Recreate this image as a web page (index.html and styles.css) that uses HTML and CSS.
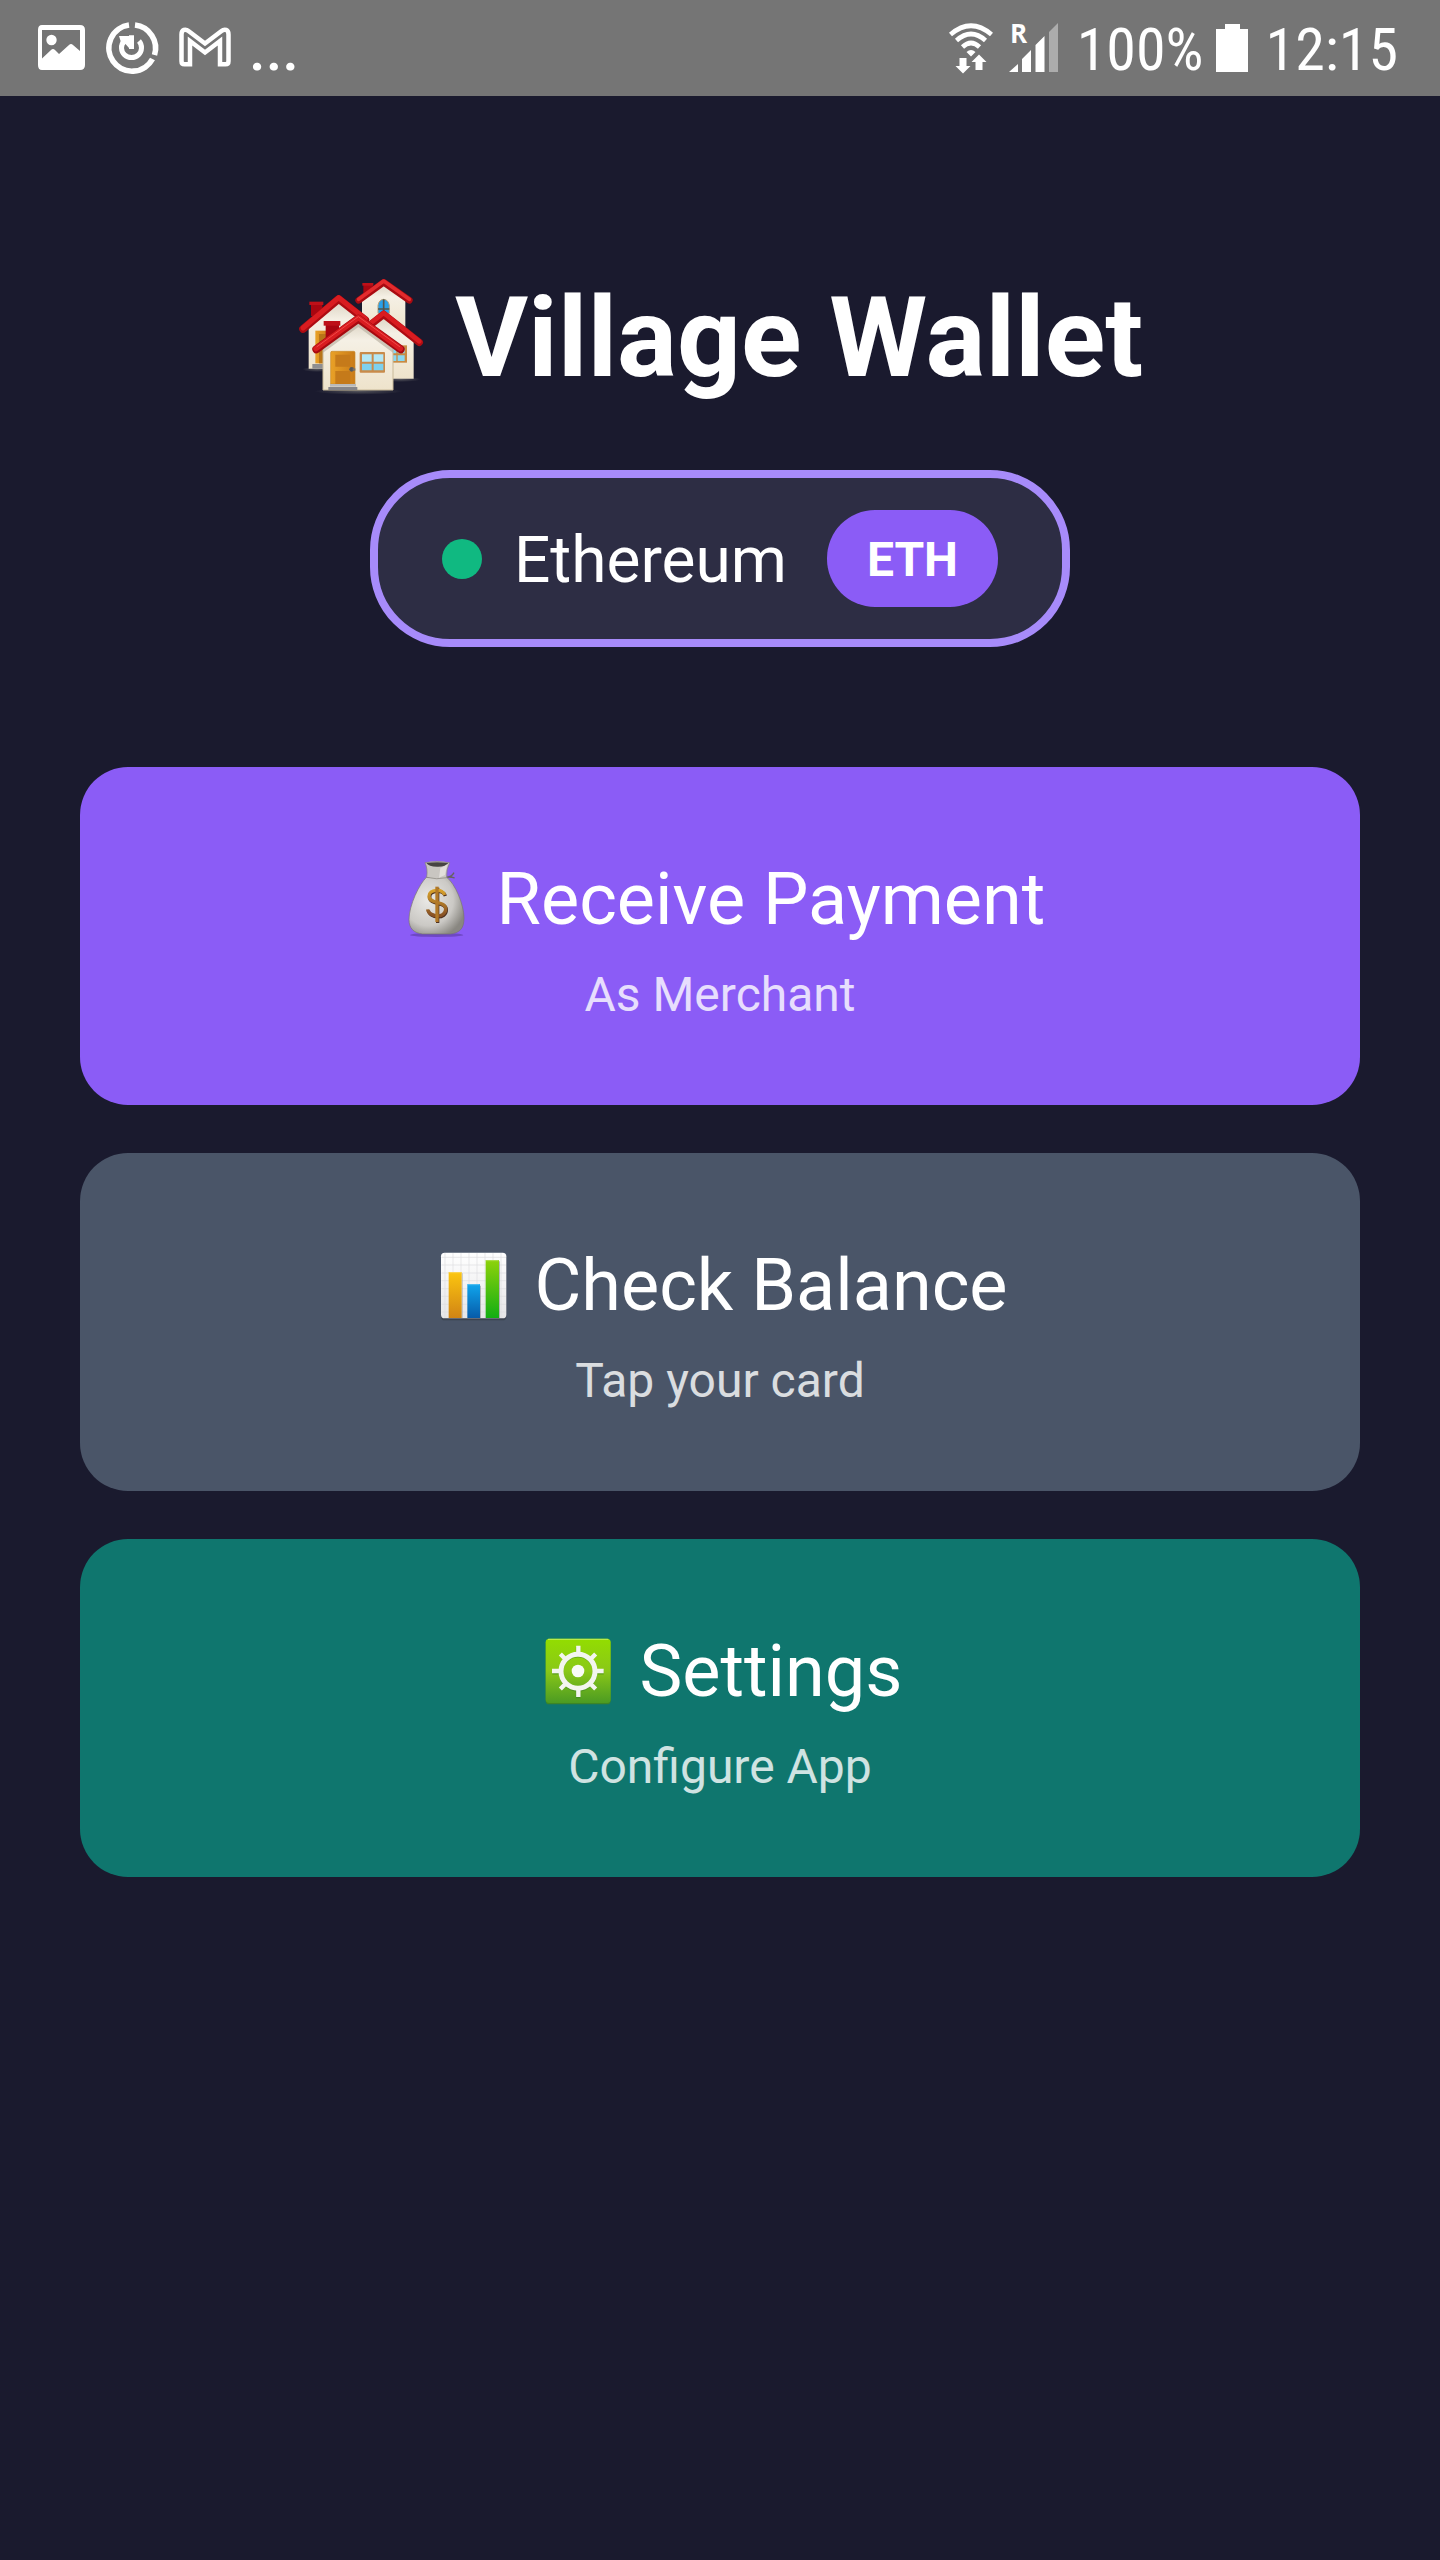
FILE: index.html
```html
<!DOCTYPE html>
<html lang="en">
<head>
<meta charset="utf-8">
<meta name="viewport" content="width=device-width, initial-scale=1">
<title>Village Wallet</title>
<link rel="stylesheet" href="styles.css">
</head>
<body>
<header class="status-bar">
  <div class="status-group notifications">
    <svg width="48" height="52" viewBox="0 0 48 52" fill="#fff" aria-hidden="true">
      <path fill-rule="evenodd" d="M4 3h38q5 0 5 5v35q0 5-5 5H4q-4 0-4-5V8q0-5 4-5zm0 5v28.500l9-8.500q2-2 4 0l4 4 10-9q2-2 4 0l7 6V8z"/>
      <circle cx="13.500" cy="18" r="5.200"/>
    </svg>
    <svg width="52" height="52" viewBox="0 0 52 52" fill="none" stroke="#fff" aria-hidden="true">
      <path stroke-width="5.600" d="M23 3A23.200 23.200 0 1 0 46.500 37M29 3A23.200 23.200 0 0 1 48.500 33"/>
      <path stroke-width="5" d="M18 19a10 10 0 1 0 15 0M25.500 14v13"/>
      <path fill="#fff" stroke="none" d="M13 14h10v12l-3.500-4-3 3z"/>
      <path stroke-width="1.500" d="M23 14h5"/>
    </svg>
    <svg width="54" height="52" viewBox="0 0 54 52" fill="none" stroke="#fff" stroke-width="4.500" stroke-linejoin="miter" aria-hidden="true">
      <path d="M12 42.300H6.500q-3 0-3-3V12.500c0-5 4-6 7-3.500L27 21.500 43.500 9c3-2.500 7-1.500 7 3.500v26.800q0 3-3 3H42V19L27 30.500 12 19z"/>
    </svg>
    <span class="more">...</span>
  </div>
  <div class="status-group system">
    <svg width="44" height="52" viewBox="0 0 44 52" fill="none" stroke="#fff" aria-hidden="true">
      <path stroke-width="4.600" d="M1.500 12.500Q22-5 42.500 12.500M7.500 18.500Q22 5.500 36.500 18.500M13.500 25Q22 17 30.500 25"/>
      <path fill="#fff" stroke="none" d="M17.500 30q4.500-4 9 0L22 34.500zM10.500 36h7v8h4L14 51.500 6.500 44h4zM26.500 48v-8h-4L30 32.500l7.500 7.500h-4v8z"/>
    </svg>
    <svg width="50" height="52" viewBox="0 0 50 52" fill="#fff" aria-hidden="true">
      <path d="M0 50l9-8v8zM13 50V37l9-9v22zM26.500 50V23l9-9v36z"/>
      <path opacity=".4" d="M40 50V10l9-9v49z"/>
      <text x="1" y="21" class="roaming">R</text>
    </svg>
    <span class="battery-level">100%</span>
    <svg width="32" height="52" viewBox="0 0 32 52" fill="#fff" aria-hidden="true"><path d="M9 2h15v5h8v43H0V7h9z"/></svg>
    <time class="clock">12:15</time>
  </div>
</header>

<main class="home">
  <h1 class="brand">
    <svg width="130" height="120" viewBox="50 54 390 360" aria-hidden="true">
      <defs>
        <linearGradient id="wall" x2="0" y2="1"><stop stop-color="#d8d0bf"/><stop offset=".3" stop-color="#f5f0e5"/><stop offset="1" stop-color="#eee3cb"/></linearGradient>
        <linearGradient id="door" x2="1"><stop stop-color="#e9a127"/><stop offset="1" stop-color="#c97b18"/></linearGradient>
        <radialGradient id="shade"><stop stop-color="#777" stop-opacity=".6"/><stop offset="1" stop-color="#777" stop-opacity="0"/></radialGradient>
      </defs>
      <ellipse cx="235" cy="394" rx="132" ry="10" fill="url(#shade)"/>
      <ellipse cx="360" cy="358" rx="62" ry="8" fill="url(#shade)"/>
      <ellipse cx="110" cy="328" rx="44" ry="8" fill="url(#shade)"/>
      <path fill="#a80610" d="M249 74h28v30h-28z"/><path fill="#be1018" d="M246 69h33v8h-33z"/>
      <path fill="url(#wall)" d="M245 115l65-49 65 49v100H245z"/>
      <path fill="#2aa0e8" stroke="#b9a37c" stroke-width="3" d="M293 160v-24q3-17 17-18 14 1 17 18v24z"/>
      <path stroke="#56554b" stroke-width="5" d="M310 118v42M293 147h34"/>
      <path fill="none" stroke="#a90b11" stroke-width="20" stroke-linecap="round" stroke-linejoin="round" d="M235 121l75-54 77 54"/>
      <path fill="none" stroke="#e32b2d" stroke-width="11" stroke-linecap="round" stroke-linejoin="round" d="M235 118l75-55 77 55"/>
      <path fill="#a80610" d="M92 133h34v35H92z"/><path fill="#be1018" d="M87 125h42v10H87z"/>
      <path fill="url(#wall)" d="M85 195l90-78 80 65v144H85z"/>
      <path fill="url(#door)" d="M105 212h44v98h-44z"/><path fill="#b87518" d="M116 222h30v88h-30z"/>
      <path fill="#8e8e91" d="M96 312h50v14H96z"/>
      <path fill="none" stroke="#ad0c12" stroke-width="23" stroke-linecap="round" stroke-linejoin="round" d="M68 207l107-90 80 63"/>
      <path fill="none" stroke="#d91c20" stroke-width="15" stroke-linecap="round" stroke-linejoin="round" d="M68 204l107-91 80 63"/>
      <path fill="url(#wall)" d="M270 200l40-38 90 70v124H270z"/>
      <path fill="#c98b42" d="M325 256h55v52h-55z"/><path fill="#89d8f2" d="M337 263h11v17h-11zM352 263h21v17h-21zM337 286h11v17h-11zM352 286h21v17h-21z"/>
      <path fill="none" stroke="#ad0c12" stroke-width="22" stroke-linecap="round" stroke-linejoin="round" d="M268 196l42-33 107 84"/>
      <path fill="none" stroke="#d91c20" stroke-width="14" stroke-linecap="round" stroke-linejoin="round" d="M268 192l42-33 107 85"/>
      <path fill="#a80610" d="M136 192h40v43h-40z"/><path fill="#bd1018" d="M130 183h50v14h-50z"/>
      <path fill="url(#wall)" stroke="#c8b998" stroke-width="3" d="M128 262l106-84 104 83v129H128z"/>
      <path fill="#b9afa0" opacity=".65" d="M128 264l106-77 104 77v14L234 201 128 278z"/>
      <path fill="url(#door)" stroke="#c98b2d" stroke-width="2" d="M151 278q0-4 4-4h65q4 0 4 4v94h-73z"/>
      <path fill="#c57a1a" d="M165 284h45v36h-45zM165 333h45v39h-45z"/><circle cx="214" cy="328" r="7" fill="#55585a"/><path fill="#77716a" d="M217 325h8v7h-8z"/>
      <path fill="#b9b9ba" d="M149 372h78v8h-78z"/><path fill="#858589" d="M144 381h87v9h-87z"/>
      <rect x="238" y="276" width="76" height="62" rx="3" fill="#c98b4a"/>
      <path fill="#b3e8f6" d="M245 283h29v22h-29zM280 283h29v22h-29z"/><path fill="#7dd1ee" d="M245 311h29v20h-29zM280 311h29v20h-29z"/>
      <path fill="none" stroke="#a60a10" stroke-width="24" stroke-linecap="round" stroke-linejoin="round" d="M108 268l126-92 127 92"/>
      <path fill="none" stroke="#d91c20" stroke-width="16" stroke-linecap="round" stroke-linejoin="round" d="M107 266l127-93 126 93"/>
      <path fill="none" stroke="#f04a48" stroke-width="3" stroke-linecap="round" stroke-linejoin="round" d="M110 260l124-90 124 90"/>
    </svg>
    <span>Village Wallet</span>
  </h1>

  <button class="network" type="button">
    <span class="network-dot"></span>
    <span class="network-name">Ethereum</span>
    <span class="network-symbol">ETH</span>
  </button>

  <nav class="actions" aria-label="Wallet actions">
    <button class="action receive" type="button">
      <span class="action-title">
        <svg width="84" height="84" viewBox="15 57 252 252" aria-hidden="true">
          <defs>
            <radialGradient id="bag" cx=".35" cy=".4" r=".7"><stop stop-color="#eae9e6"/><stop offset=".65" stop-color="#cbc9c5"/><stop offset="1" stop-color="#898781"/></radialGradient>
            <linearGradient id="coin" x2="0" y2="1"><stop stop-color="#d7a12b"/><stop offset="1" stop-color="#865025"/></linearGradient>
          </defs>
          <ellipse cx="140" cy="288" rx="80" ry="6" fill="#5b3ba4" opacity=".6"/>
          <path fill="none" stroke="#66625f" stroke-width="4" d="M168 114q16 2 24-13M168 115q14-3 26 2"/>
          <path fill="url(#bag)" stroke="#77736e" stroke-width="2" d="M109 115h61c25 18 52 82 52 122 0 32-13 45-42 48H98c-27-3-41-17-41-43 0-44 31-106 52-127z"/>
          <path fill="#c9c6c1" stroke="#858079" stroke-width="2" d="M105 71q35-8 74 0-11 20-9 45-30 7-60-1 4-26-5-44z"/>
          <path fill="#464442" d="M109 72q32-5 66 0-8 12-34 11-25 0-32-11z"/>
          <path fill="#e2dfdb" d="M151 87q14-5 21-11l-7 32-18 8z"/>
          <g fill="none" stroke-width="10"><path stroke="#4e3020" d="M166 171c-6-21-48-18-47 4 1 25 50 12 50 38 0 29-51 25-54 1M143 146v106"/><path stroke="url(#coin)" d="M164 168c-6-21-48-18-47 4 1 25 50 12 50 38 0 29-51 25-54 1"/><path stroke="#b27928" d="M141 143v106"/></g>
        </svg>
        <span>Receive Payment</span>
      </span>
      <span class="action-note">As Merchant</span>
    </button>
    <button class="action balance" type="button">
      <span class="action-title">
        <svg width="84" height="84" viewBox="37 42 252 252" aria-hidden="true">
          <defs>
            <linearGradient id="paper" x2="0" y2="1"><stop stop-color="#fff"/><stop offset="1" stop-color="#e6e6e8"/></linearGradient>
            <linearGradient id="amber" x2="0" y2="1"><stop stop-color="#fcc60f"/><stop offset="1" stop-color="#d18415"/></linearGradient>
            <linearGradient id="blue" x2="0" y2="1"><stop stop-color="#10a6ed"/><stop offset="1" stop-color="#075ba9"/></linearGradient>
            <linearGradient id="lime" x2="0" y2="1"><stop stop-color="#8ed20b"/><stop offset="1" stop-color="#12ae12"/></linearGradient>
          </defs>
          <rect x="64" y="73" width="196" height="198" rx="11" fill="#343b45" opacity=".65"/>
          <rect x="64" y="68" width="196" height="197" rx="11" fill="url(#paper)"/>
          <path stroke="#dedee1" stroke-width="2" d="M76 69v195M100 69v195M124 69v195M148 69v195M172 69v195M196 69v195M220 69v195M244 69v195M65 82h194M65 105h194M65 129h194M65 152h194M65 176h194M65 199h194M65 223h194M65 246h194"/>
          <path fill="#8d9195" opacity=".6" d="M126 130h3v134h-3zM181 167h3v97h-3zM238 94h3v170h-3z"/>
          <path fill="url(#amber)" d="M87 126h39v138H87z"/><path fill="url(#blue)" d="M143 162h38v102h-38z"/><path fill="url(#lime)" d="M198 90h40v174h-40z"/>
          <path stroke="#fff" stroke-width="3" opacity=".3" d="M88 128h37M144 164h36M199 92h38"/>
        </svg>
        <span>Check Balance</span>
      </span>
      <span class="action-note">Tap your card</span>
    </button>
    <button class="action settings" type="button">
      <span class="action-title">
        <svg width="84" height="84" viewBox="53 45 252 252" aria-hidden="true">
          <defs><linearGradient id="tile" x2="0" y2="1"><stop stop-color="#93dd00"/><stop offset=".5" stop-color="#8ac818"/><stop offset="1" stop-color="#4c9b22"/></linearGradient></defs>
          <rect x="76" y="74" width="195" height="194" rx="11" fill="#3d8525"/>
          <rect x="76" y="71" width="195" height="193" rx="11" fill="url(#tile)"/>
          <path d="M83 73h181" stroke="#c3ef57" stroke-width="3"/>
          <g fill="none" stroke="#377c20" stroke-width="13" opacity=".5"><circle cx="173" cy="172" r="51"/><path d="M173 96v28M173 219v31M96 172h28M221 172h29"/></g>
          <g fill="none" stroke="#f3f5ef"><circle cx="173" cy="169" r="51" stroke-width="15"/><path stroke-width="13" d="M174 92v30M174 217v29M95 168h30M221 168h29M120 117l18 18M208 204l18 18M120 222l18-18M208 135l18-18"/></g>
          <circle cx="173" cy="168" r="19" fill="#fafbf8"/>
        </svg>
        <span>Settings</span>
      </span>
      <span class="action-note">Configure App</span>
    </button>
  </nav>
</main>
</body>
</html>
```
FILE: styles.css
```css
* {
  box-sizing: border-box;
}

body {
  margin: 0;
  min-height: 100vh;
  background: #1a1a2e;
  color: #fff;
  font-family: Roboto, "Liberation Sans", sans-serif;
}

svg {
  flex: none;
  overflow: visible;
}

button {
  border: 0;
  color: inherit;
  font: inherit;
  cursor: pointer;
}

.status-bar {
  display: flex;
  justify-content: space-between;
  height: 96px;
  padding: 0 42px 0 38px;
  background: #757575;
}

.status-group {
  display: flex;
  align-items: center;
}

.notifications {
  gap: 20px;
}

.more {
  margin-left: -3px;
  padding-top: 4px;
  font-size: 60px;
  font-weight: 500;
  line-height: 72px;
}

.system {
  gap: 16px;
  font-family: "Roboto Condensed", "Liberation Sans Narrow", Roboto, sans-serif;
  font-size: 60px;
  line-height: 72px;
}

.battery-level {
  margin: 0 -4px 0 2px;
  padding-top: 4px;
}

.clock {
  margin-left: 2px;
  padding-top: 4px;
}

.roaming {
  font-family: "Open Sans", sans-serif;
  font-size: 26px;
  font-weight: 700;
}

.home {
  padding: 162px 80px 80px;
}

.brand {
  display: flex;
  align-items: center;
  justify-content: center;
  gap: 28px;
  margin: 0;
  font-size: 112px;
  font-weight: 700;
  line-height: 160px;
}

.network {
  display: flex;
  align-items: center;
  width: fit-content;
  margin: 52px auto 0;
  padding: 32px 64px;
  border: 8px solid #a78bfa;
  border-radius: 80px;
  background: #2d2d44;
}

.network-dot {
  width: 40px;
  height: 40px;
  border-radius: 50%;
  background: #10b981;
}

.network-name {
  margin: 0 40px 0 32px;
  padding-top: 4px;
  font-size: 64px;
  line-height: 76px;
}

.network-symbol {
  padding: 21px 40px 19px;
  border-radius: 48px;
  background: #8b5cf6;
  font-size: 48px;
  font-weight: 700;
  line-height: 57px;
}

.actions {
  display: flex;
  flex-direction: column;
  gap: 48px;
  margin-top: 120px;
}

.action {
  display: flex;
  flex-direction: column;
  align-items: center;
  gap: 22px;
  padding: 89px 80px 82px;
  border-radius: 48px;
}

.action-title {
  display: flex;
  align-items: center;
  gap: 18px;
  font-size: 72px;
  line-height: 88px;
}

.action-note {
  font-size: 48px;
  line-height: 57px;
  opacity: 0.8;
}

.receive {
  background: #8b5cf6;
}

.balance {
  background: #4a5568;
}

.settings {
  background: #0f766e;
}
```
